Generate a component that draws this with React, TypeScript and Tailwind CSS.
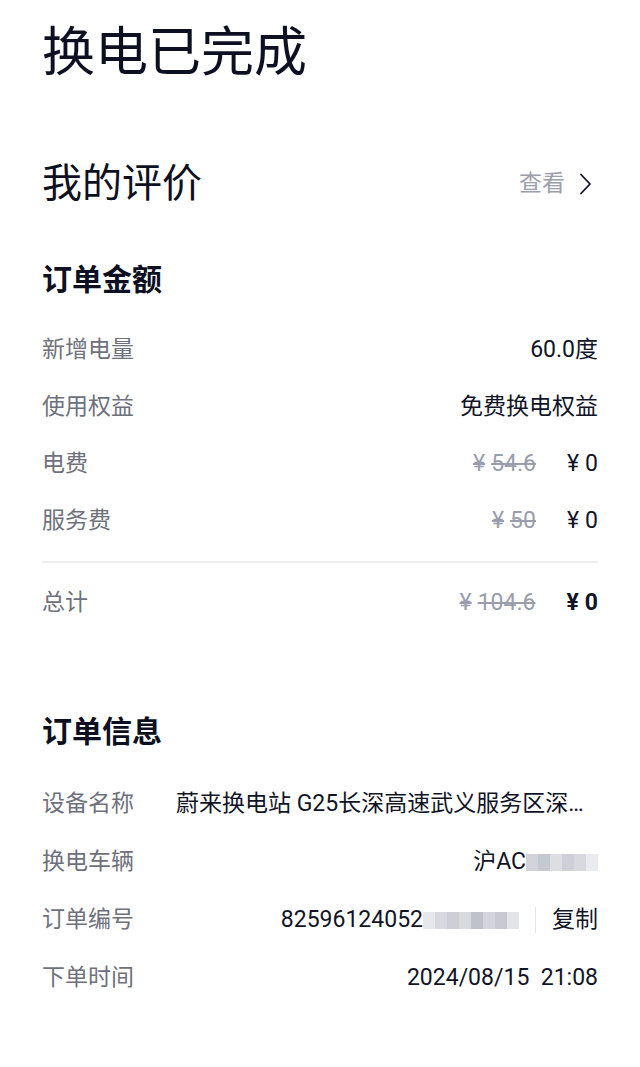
import React from 'react';

const font = { fontFamily: 'Roboto, "Noto Sans CJK SC", sans-serif' };

type Row = { label: string; value: React.ReactNode };

const Yen: React.FC<{ children: React.ReactNode; className?: string }> = ({ children, className }) => (
  <span className={className}>
    <span className="mr-[6px]">¥</span>
    {children}
  </span>
);

const Strike: React.FC<{ children: React.ReactNode }> = ({ children }) => (
  <Yen className="text-[#9a9dab] line-through decoration-[#9a9dab] mr-[31px]">{children}</Yen>
);

const Mosaic: React.FC<{ cells: string[]; className?: string }> = ({ cells, className }) => (
  <span className={`inline-flex items-center ${className ?? ''}`}>
    {cells.map((c, i) => (
      <span key={i} className="inline-block w-[12px] h-[17px]" style={{ backgroundColor: c }} />
    ))}
  </span>
);

const InfoRow: React.FC<Row & { tall?: boolean }> = ({ label, value, tall }) => (
  <div className={`flex items-center justify-between ${tall ? 'h-[58px]' : 'h-[57px]'}`}>
    <span className="text-[#6e717c] text-[23px] shrink-0">{label}</span>
    <div className="flex items-center justify-end text-[23px] text-[#111427] min-w-0">{value}</div>
  </div>
);

const App: React.FC = () => {
  const amountRows: Row[] = [
    { label: '新增电量', value: '60.0度' },
    { label: '使用权益', value: '免费换电权益' },
    { label: '电费', value: <><Strike>54.6</Strike><Yen>0</Yen></> },
    { label: '服务费', value: <><Strike>50</Strike><Yen>0</Yen></> },
  ];

  return (
    <div className="w-[640px] min-h-[1067px] bg-white px-[42px]" style={font}>
      <h1 className="pt-[22px] text-[53px] leading-[62px] text-[#0d1020] font-normal">换电已完成</h1>

      <div className="mt-[74px] flex items-center justify-between h-[52px]">
        <span className="text-[40px] text-[#0d1020]">我的评价</span>
        <span className="flex items-center text-[23px] text-[#9a9dab]">
          查看
          <svg className="ml-[14px] mr-[6px]" width="13" height="22" viewBox="0 0 13 22" fill="none">
            <path d="M2 1.5 L11 11 L2 20.5" stroke="#111427" strokeWidth="1.8" strokeLinecap="round" strokeLinejoin="round" />
          </svg>
        </span>
      </div>

      <h2 className="mt-[50px] text-[30px] leading-[40px] font-bold text-[#0d1020]">订单金额</h2>

      <div className="mt-[22px]">
        {amountRows.map(r => <InfoRow key={r.label} {...r} />)}
      </div>

      <div className="mt-[11px] h-[2px] bg-[#eeeff1]" />

      <div className="mt-[12px]">
        <InfoRow label="总计" value={<><Strike>104.6</Strike><Yen className="font-bold">0</Yen></>} />
      </div>

      <h2 className="mt-[80px] text-[30px] leading-[40px] font-bold text-[#0d1020]">订单信息</h2>

      <div className="mt-[23px]">
        <InfoRow
          tall
          label="设备名称"
          value={<span className="truncate max-w-[422px]">蔚来换电站 G25长深高速武义服务区深圳方向</span>}
        />
        <InfoRow
          tall
          label="换电车辆"
          value={
            <span className="flex items-center">
              沪AC
              <Mosaic className="opacity-80" cells={['#c9cad3', '#babcc7', '#d5d6dd', '#c3c4ce', '#cfd0d8', '#e6e7eb']} />
            </span>
          }
        />
        <InfoRow
          tall
          label="订单编号"
          value={
            <>
              <span>82596124052</span>
              <Mosaic cells={['#e7e8ec', '#d8d9e0', '#cdced6', '#d9dae0', '#bfc1cb', '#d4d5dc', '#c8c9d2', '#e4e5ea']} />
              <span className="mx-[16px] w-px h-[26px] bg-[#e3e4e8]" />
              <span>复制</span>
            </>
          }
        />
        <InfoRow tall label="下单时间" value={<span className="whitespace-pre">2024/08/15  21:08</span>} />
      </div>
    </div>
  );
};

export default App;
